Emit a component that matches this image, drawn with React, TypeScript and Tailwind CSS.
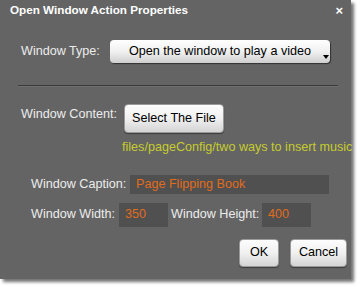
const font = { fontFamily: '"Liberation Sans", Arial, sans-serif' };

function GrayButton({ label, className }: { label: string; className: string }) {
  return (
    <button
      className={`flex shrink-0 items-center justify-center rounded-[4px] border border-[#9a9a9a] bg-gradient-to-b from-[#fdfdfd] via-[#f0f0f0] to-[#d4d4d4] text-[12.6px] text-black shadow-[0_1px_1px_rgba(0,0,0,0.4)] ${className}`}
    >
      {label}
    </button>
  );
}

export default function App() {
  return (
    <div className="h-[287px] w-[360px] overflow-hidden bg-white" style={font}>
      <div className="flex h-[279px] w-[351px] flex-col whitespace-nowrap bg-[#646464] shadow-[3px_3px_3px_rgba(0,0,0,0.55)]">
        <div className="flex h-[20px] shrink-0 items-center justify-between pl-[10px] pr-[8px]">
          <span className="text-[11.7px] font-bold text-white">Open Window Action Properties</span>
          <span className="text-[13px] font-bold leading-none text-white">×</span>
        </div>

        <div className="mt-[20px] flex shrink-0 items-center pl-[21px]">
          <span className="w-[89px] shrink-0 text-[12.6px] text-[#ececec]">Window Type:</span>
          <div className="relative flex h-[23px] w-[220px] shrink-0 items-center justify-center rounded-[4px] bg-gradient-to-b from-[#ffffff] via-[#f1f1f1] to-[#cfcfcf] text-[12.6px] text-black shadow-[1px_1px_1px_rgba(0,0,0,0.5)]">
            Open the window to play a video
            <span className="absolute bottom-[4px] right-[1px] h-0 w-0 border-x-[3px] border-t-[4px] border-x-transparent border-t-black" />
          </div>
        </div>

        <div className="ml-[18px] mt-[22px] h-[1px] w-[320px] shrink-0 bg-[#3a3a3a] shadow-[0_1px_0_rgba(255,255,255,0.08)]" />

        <div className="mt-[18px] flex shrink-0 items-start pl-[21px]">
          <span className="mt-[1px] w-[103px] shrink-0 text-[12.6px] text-[#ececec]">Window Content:</span>
          <GrayButton label="Select The File" className="h-[29px] w-[100px]" />
        </div>
        <div className="mt-[5px] shrink-0 pl-[122px] text-[12.6px] text-[#c6cc2e]">
          files/pageConfig/two ways to insert music
        </div>

        <div className="mt-[18px] flex shrink-0 items-center pl-[31px]">
          <span className="w-[99px] shrink-0 text-[12.6px] text-[#ececec]">Window Caption:</span>
          <div className="flex h-[19px] w-[199px] shrink-0 items-center bg-[#505050] pl-[6px] text-[12.6px] text-[#e06c1c]">
            Page Flipping Book
          </div>
        </div>

        <div className="mt-[9px] flex shrink-0 items-center pl-[31px]">
          <span className="w-[88px] shrink-0 text-[12.6px] text-[#ececec]">Window Width:</span>
          <div className="flex h-[24px] w-[49px] shrink-0 items-center bg-[#505050] pl-[6px] text-[12.6px] text-[#e06c1c]">350</div>
          <span className="w-[94px] shrink-0 pl-[3px] text-[12.6px] text-[#ececec]">Window Height:</span>
          <div className="flex h-[24px] w-[49px] shrink-0 items-center bg-[#505050] pl-[6px] text-[12.6px] text-[#e06c1c]">400</div>
        </div>

        <div className="mt-[12px] flex shrink-0 justify-end gap-[11px] pr-[4px]">
          <GrayButton label="OK" className="h-[28px] w-[40px]" />
          <GrayButton label="Cancel" className="h-[28px] w-[57px]" />
        </div>
      </div>
    </div>
  );
}
